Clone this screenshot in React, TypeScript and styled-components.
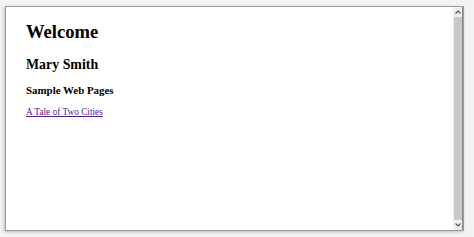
import React from 'react';
import styled, { createGlobalStyle } from 'styled-components';

const GlobalStyle = createGlobalStyle`
  html, body {
    margin: 0;
    padding: 0;
    background: #f3f3f3;
  }
  body {
    width: 474px;
    height: 237px;
    overflow: hidden;
  }
`;

const Stage = styled.div`
  padding: 6px 0 0 5px;
`;

const Frame = styled.div`
  display: flex;
  width: 457px;
  height: 223px;
  background: #ffffff;
  border: 1px solid #9c9c9c;
  box-shadow: -1px 1px 3px rgba(0, 0, 0, 0.22);
`;

const Page = styled.div`
  flex: 1;
  padding: 16px 20px 0 20px;
  font-family: 'Liberation Serif', 'Times New Roman', serif;
  color: #000;
`;

const Heading = styled.div<{ $size: number; $gap: number }>`
  margin: ${(p) => p.$gap}px 0 0 0;
  font-size: ${(p) => p.$size}px;
  line-height: 1;
  font-weight: bold;
  &:first-child {
    margin-top: 0;
  }
`;

const LinkLine = styled.div`
  margin-top: 11.7px;
  font-size: 9.3px;
  line-height: 1;
`;

const StoryLink = styled.a`
  color: #551a8b;
  text-decoration: underline;
`;

const Scrollbar = styled.div`
  display: flex;
  flex-direction: column;
  align-items: center;
  width: 9px;
  background: #f0f0f0;
  border-right: 1px solid #8a8a8a;
`;

const Arrow = styled.div`
  display: flex;
  align-items: center;
  justify-content: center;
  height: 10px;
  width: 100%;
`;

const Thumb = styled.div`
  flex: 1;
  width: 8px;
  background: #c8c8c8;
`;

const Chevron: React.FC<{ up?: boolean }> = ({ up }) => (
  <svg width="6" height="4" viewBox="0 0 6 4">
    <path
      d={up ? 'M0.5 3.5 L3 1 L5.5 3.5' : 'M0.5 0.5 L3 3 L5.5 0.5'}
      fill="none"
      stroke="#505050"
      strokeWidth="1.1"
    />
  </svg>
);

const App: React.FC = () => {
  return (
    <>
      <GlobalStyle />
      <Stage>
        <Frame>
          <Page>
            <Heading $size={18.6} $gap={0}>Welcome</Heading>
            <Heading $size={13.9} $gap={16.1}>Mary Smith</Heading>
            <Heading $size={10.9} $gap={13.6}>Sample Web Pages</Heading>
            <LinkLine>
              <StoryLink href="#">A Tale of Two Cities</StoryLink>
            </LinkLine>
          </Page>
          <Scrollbar>
            <Arrow>
              <Chevron up />
            </Arrow>
            <Thumb />
            <Arrow>
              <Chevron />
            </Arrow>
          </Scrollbar>
        </Frame>
      </Stage>
    </>
  );
};

export default App;
